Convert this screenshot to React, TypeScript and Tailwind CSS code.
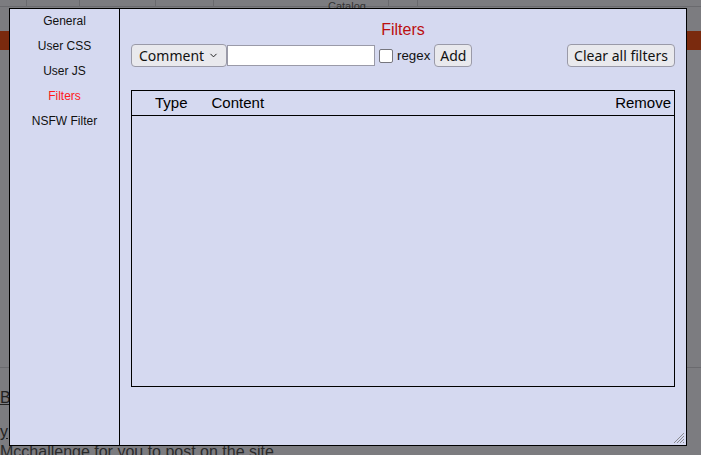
import { ChevronDown } from 'lucide-react';

const SIDEBAR_ITEMS = ['General', 'User CSS', 'User JS', 'Filters', 'NSFW Filter'];
const ACTIVE_ITEM = 'Filters';

const ui = { fontFamily: '"Noto Sans", sans-serif' };
const arial = { fontFamily: '"Liberation Sans", Arial, sans-serif' };

const Backdrop = () => (
  <div className="absolute inset-0 bg-[#7c7c80]" style={arial}>
    {/* page behind the dim layer */}
    <div className="flex h-[7px] items-end border-b border-[#6a6a6e]">
      <div className="h-full w-[27px] border-r border-[#6a6a6e]" />
      <div className="h-full w-[53px] border-r border-[#6a6a6e]" />
      <div className="h-full w-[76px] border-r border-[#6a6a6e]" />
      <div className="h-full w-[58px] border-r border-[#6a6a6e]" />
      <div className="h-full w-[175px] border-r border-[#6a6a6e]" />
      <div className="h-full w-[29px] border-r border-[#6a6a6e]" />
    </div>
    <div className="mt-[-6px] pl-[328px] text-[11px] leading-none text-[#333]">Catalog</div>
    <div className="mt-[19px] h-[19px] bg-[#7a2a0e]" />
    <div className="mt-[317px] h-px bg-[#6a6a6e]" />
    <div className="mt-[22px] text-[16px] leading-none text-[#222] underline">B</div>
    <div className="mt-[18px] text-[16px] leading-none text-[#222] underline">y</div>
    <div className="mt-[3px] text-[16px] leading-[18px] text-[#2a2a2a]">Mcchallenge for you to post on the site</div>
  </div>
);

const SelectBox = () => (
  <div
    className="flex h-[23px] w-[96px] items-center justify-between rounded-[4px] border border-[#9a9aa8] bg-[#e9e9ed] pl-[7px] pr-[7px] text-[14px] text-[#111]"
    style={ui}
  >
    <span>Comment</span>
    <ChevronDown size={11} strokeWidth={2} />
  </div>
);

const Button = ({ label, className }: { label: string; className?: string }) => (
  <div
    className={`flex h-[23px] items-center justify-center rounded-[4px] border border-[#9a9aa8] bg-[#e9e9ed] text-[14px] text-[#111] ${className ?? ''}`}
    style={ui}
  >
    {label}
  </div>
);

const ResizeGrip = () => (
  <svg className="absolute bottom-[1px] right-[1px]" width="12" height="12" viewBox="0 0 12 12">
    <path d="M11 1 L1 11 M11 4 L4 11 M11 7 L7 11 M11 10 L10 11" stroke="#8a8a90" strokeWidth="1" />
  </svg>
);

const App = () => {
  return (
    <div className="relative h-[455px] w-[701px] overflow-hidden">
      <Backdrop />
      <div
        className="absolute left-[9px] top-[8px] flex h-[438px] w-[678px] border border-black bg-[#d5d9f0]"
        style={arial}
      >
        <nav className="flex w-[110px] flex-col items-center border-r border-black pt-[5px]">
          {SIDEBAR_ITEMS.map((item) => (
            <div
              key={item}
              className={`h-[25px] text-[12px] leading-[15px] ${item === ACTIVE_ITEM ? 'text-[#ff1a1a]' : 'text-[#111]'}`}
            >
              {item}
            </div>
          ))}
        </nav>
        <main className="relative flex flex-1 flex-col px-[11px]">
          <h2 className="mt-[11px] text-center text-[16px] leading-[19px] text-[#bb0f0f]">Filters</h2>
          <div className="mt-[5px] flex items-center">
            <SelectBox />
            <div className="h-[21px] w-[148px] border border-[#9a9aa8] bg-white" />
            <div className="ml-[4px] h-[14px] w-[14px] rounded-[2px] border-[1.5px] border-[#76767e] bg-white" />
            <span className="ml-[4px] text-[13.33px] text-[#111]">regex</span>
            <Button label="Add" className="ml-[4px] w-[38px]" />
            <Button label="Clear all filters" className="ml-auto w-[108px]" />
          </div>
          <div className="mt-[23px] h-[297px] border border-black">
            <div className="flex h-[25px] items-center border-b border-black text-[15px] text-black">
              <span className="ml-[23px]">Type</span>
              <span className="ml-[24px]">Content</span>
              <span className="ml-auto mr-[3px]">Remove</span>
            </div>
          </div>
          <ResizeGrip />
        </main>
      </div>
    </div>
  );
};

export default App;
